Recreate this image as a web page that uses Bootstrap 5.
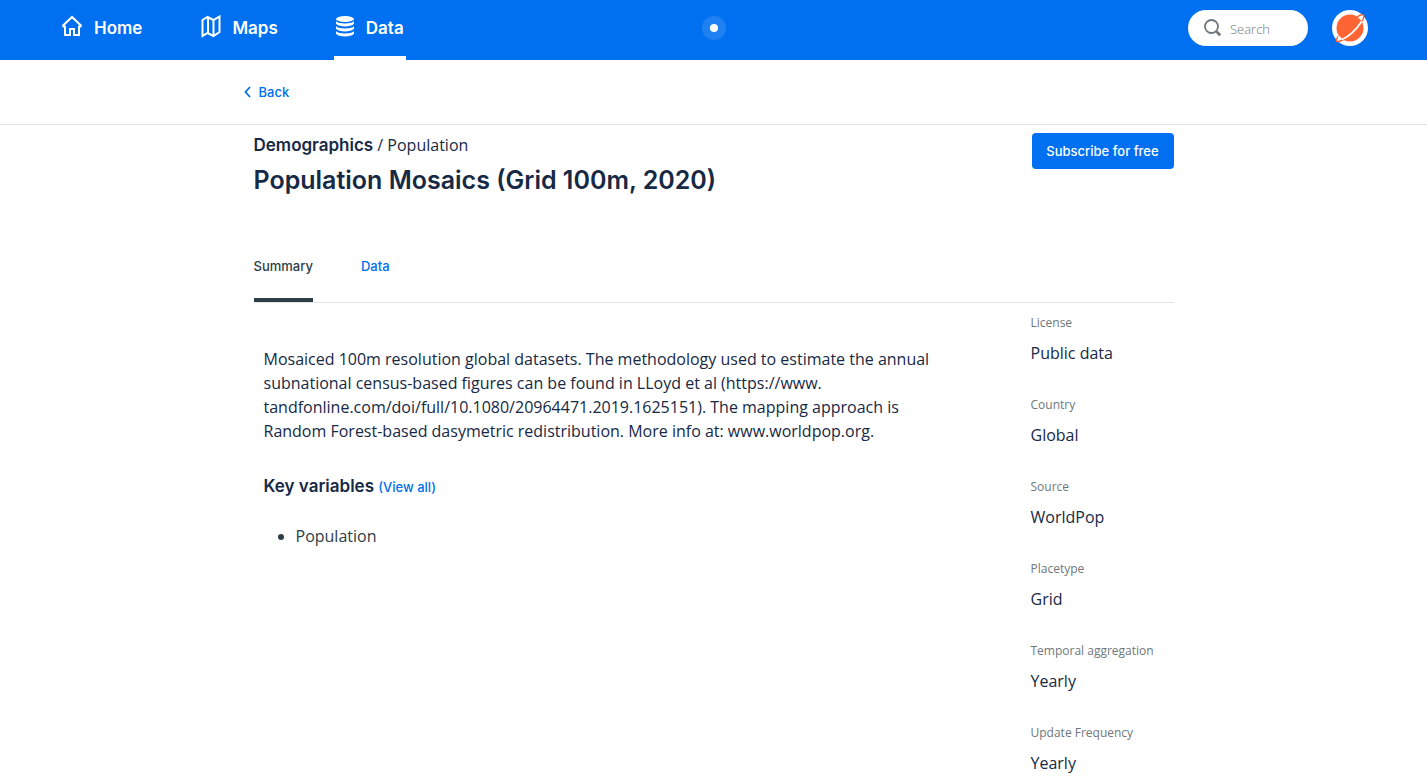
<!DOCTYPE html>
<html lang="en">
<head>
<meta charset="utf-8">
<meta name="viewport" content="width=device-width, initial-scale=1">
<title>Population Mosaics (Grid 100m, 2020)</title>
<link href="https://cdn.jsdelivr.net/npm/bootstrap@5.3.0/dist/css/bootstrap.min.css" rel="stylesheet">
<style>
:root { --brand: #0070f0; --navy: #162945; --ink: #2c3e46; --rule: #e2e6e9; --muted: #6f777c; }
body { font-family: "Open Sans", sans-serif; font-size: 16px; line-height: 24px; color: var(--navy); }
a { color: var(--brand); text-decoration: none; }
.heading-font { font-family: Inter, sans-serif; font-weight: 600; }
.topbar { background: var(--brand); height: 60px; padding: 0 59px 0 60px; }
.side { flex: 1 1 0; }
.main-links { gap: 54px; }
.main-links a { color: #fff; height: 60px; gap: 10px; border-bottom: 4px solid transparent; font-size: 17px; padding-right: 2px; }
.main-links a.active { border-color: #fff; }
.main-links svg { margin-bottom: 4px; }
.pulse { width: 24px; height: 24px; background: #1f80f2; }
.pulse span { width: 8px; height: 8px; background: #fff; }
.search-pill { width: 120px; height: 36px; padding: 0 16px; gap: 8px; }
.search-pill input { border: 0; outline: 0; padding: 1px 0 0; min-width: 0; width: 100%; background: none; font-size: 13px; font-weight: 300; line-height: 20px; color: var(--muted); }
.search-pill input::placeholder { color: var(--muted); opacity: 1; }
.back-row { border-bottom: 1px solid var(--rule); height: 65px; }
.page { max-width: 940px; padding: 0 10px; margin: 0 auto; }
.back-row .page { padding: 0; }
.label-text { font-size: 13px; line-height: 20px; font-weight: 500; }
.page-title { font-size: 25px; line-height: 32px; margin: 7px 0 0; }
.crumb { font-size: 17px; }
.btn-brand { --bs-btn-bg: #0070f0; --bs-btn-color: #fff; --bs-btn-hover-bg: #0061d1; --bs-btn-hover-color: #fff; height: 36px; padding: 0 14px; min-width: 142px; border: 0; border-radius: 4px; }
.section-tabs { margin-top: 50px; gap: 48px; border-bottom: 1px solid var(--rule); }
.section-tabs a { padding: 10px 0 22px; border-bottom: 4px solid transparent; }
.section-tabs a.active { color: var(--ink); border-color: var(--ink); }
.summary { max-width: 690px; padding: 44px 0 0 10px; }
.summary h2 { font-size: 17px; line-height: 24px; margin: 31px 0 26px; }
.summary ul { color: var(--ink); }
.facts { width: 143px; padding-top: 10px; }
.facts dt { font-size: 12px; line-height: 20px; font-weight: 400; color: var(--muted); margin-bottom: 8px; }
.facts dd { margin-bottom: 30px; }
</style>
</head>
<body>
<header class="topbar d-flex">
  <nav class="side main-links d-flex heading-font" aria-label="Main">
    <a href="#" class="d-flex align-items-center">
      <svg width="24" height="24" viewBox="0 0 24 24" fill="none" stroke="#fff" stroke-width="2"><path d="M5 12v9h5v-6h4v6h5v-9M2.500 12.500h3M18.500 12.500h3M2.500 12L12 3l9.500 9"/></svg>
      <span>Home</span></a>
    <a href="#" class="d-flex align-items-center">
      <svg width="24" height="24" viewBox="0 0 24 24" fill="none" stroke="#fff" stroke-width="2"><path d="M4.500 6l5-3 6 3 6-3.500V18l-6 4-6-3-5 3zM10 3v16M15.500 6v16"/></svg>
      <span>Maps</span></a>
    <a href="#" class="active d-flex align-items-center" aria-current="page">
      <svg width="22" height="24" viewBox="0 0 22 24" fill="#fff"><ellipse cx="11" cy="5" rx="9" ry="3"/><path d="M2 7.200c3 3 15 3 18 0v2.500c-3 3.600-15 3.600-18 0zM2 12.200c3 3 15 3 18 0v2.500c-3 3.600-15 3.600-18 0zM2 17.200c3 3 15 3 18 0v2.500c-3 3.600-15 3.600-18 0z"/></svg>
      <span>Data</span></a>
  </nav>
  <div class="d-flex align-items-center pb-1"><div class="pulse rounded-circle d-flex align-items-center justify-content-center"><span class="rounded-circle"></span></div></div>
  <div class="side d-flex justify-content-end align-items-center gap-4 pb-1">
    <label class="search-pill bg-white rounded-pill d-flex align-items-center">
      <svg class="flex-shrink-0" width="18" height="18" viewBox="0 0 18 18" fill="none" stroke="#6f777c"><circle cx="7.500" cy="7.500" r="6.500" stroke-width="1.800"/><path d="M12 12l1.500 1.500" stroke-width="2"/><path d="M13.200 13.200l3 3" stroke-width="2.800"/></svg>
      <input type="text" placeholder="Search" aria-label="Search">
    </label>
    <a href="#" aria-label="Account" class="d-flex">
      <svg width="36" height="36" viewBox="0 0 36 36"><circle cx="18" cy="18" r="18" fill="#fff"/><circle cx="18" cy="18" r="13.500" fill="#ff6434"/><path d="M25 7C30 3.500 33.500 4 31 9.500C28 16 17 27 9.500 30.500C4 33 3 31 6.500 26" fill="none" stroke="#ff6434" stroke-width="1.500"/><path d="M30 11C25 18.500 17 26.500 10 29.500" fill="none" stroke="#fff" stroke-width="1.800"/><path d="M26 8l4.500-2.500-.5 5zM6.500 25.500l4 3.500-4.500 1.500z" fill="#fff"/></svg>
    </a>
  </div>
</header>
<div class="back-row d-flex align-items-center">
  <div class="page w-100"><a href="#" class="label-text heading-font d-inline-flex align-items-center gap-2">
    <svg width="7" height="12" viewBox="0 0 7 12" fill="none" stroke="#0070f0" stroke-width="1.800"><path d="M6 1L1.500 6L6 11"/></svg>Back</a></div>
</div>
<main class="page">
  <div class="d-flex justify-content-between align-items-start pt-2">
    <div>
      <div><span class="heading-font crumb">Demographics</span> / Population</div>
      <h1 class="page-title heading-font">Population Mosaics (Grid 100m, 2020)</h1>
    </div>
    <button type="button" class="btn btn-brand label-text heading-font">Subscribe for free</button>
  </div>
  <nav class="section-tabs d-flex label-text heading-font" aria-label="Sections">
    <a href="#" class="active" aria-current="page">Summary</a>
    <a href="#">Data</a>
  </nav>
  <div class="d-flex justify-content-between">
    <section class="summary">
      <p class="mb-0">Mosaiced 100m resolution global datasets. The methodology used to estimate the annual subnational census-based figures can be found in LLoyd et al (https://www.<wbr>tandfonline.com/doi/full/10.1080/20964471.2019.1625151). The mapping approach is Random Forest-based dasymetric redistribution. More info at: www.worldpop.org.</p>
      <h2 class="heading-font">Key variables <a href="#" class="label-text">(View all)</a></h2>
      <ul><li>Population</li></ul>
    </section>
    <dl class="facts flex-shrink-0 mb-0">
      <dt>License</dt><dd>Public data</dd>
      <dt>Country</dt><dd>Global</dd>
      <dt>Source</dt><dd>WorldPop</dd>
      <dt>Placetype</dt><dd>Grid</dd>
      <dt>Temporal aggregation</dt><dd>Yearly</dd>
      <dt>Update Frequency</dt><dd>Yearly</dd>
    </dl>
  </div>
</main>
<script src="https://cdn.jsdelivr.net/npm/bootstrap@5.3.0/dist/js/bootstrap.bundle.min.js"></script>
</body>
</html>
